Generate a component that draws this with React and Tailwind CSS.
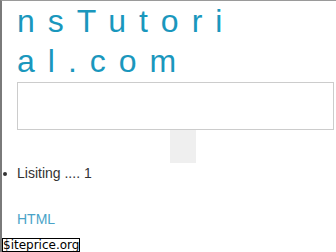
import React from "react";

export default function App() {
  return (
    <div className="relative w-[336px] h-[252px] overflow-hidden bg-white border-l-2 border-t border-l-[#7a7a7a] border-t-[#9a9a9a] font-['Liberation_Sans',Arial,sans-serif]">
      <div className="pl-[15px]">
        <h1 className="w-[235px] break-all text-[32px] leading-[40px] tracking-[13px] text-[#1a97bd] font-normal">
          nsTutorial.com
        </h1>
        <div className="mt-[1px] h-[48px] w-[317px] border border-[#cccccc] bg-white" />
        <div className="flex">
          <div className="ml-[153px] h-[33px] w-[26px] bg-[#efefef]" />
        </div>
        <ul className="mt-[2px]">
          <li className="relative text-[14px] leading-[16px] text-[#333333]">
            <span className="absolute left-[-14px] top-[7px] h-[4px] w-[4px] rounded-full bg-[#333333]" />
            Lisiting .... 1
          </li>
        </ul>
        <div className="mt-[30px] text-[14px] leading-[16px] text-[#4aa3c8]">HTML</div>
      </div>
      <div className="absolute left-0 bottom-0 h-[14px] border border-black bg-white text-[12px] leading-[12px] text-black font-['DejaVu_Sans',sans-serif]">
        $iteprice.org
      </div>
    </div>
  );
}
